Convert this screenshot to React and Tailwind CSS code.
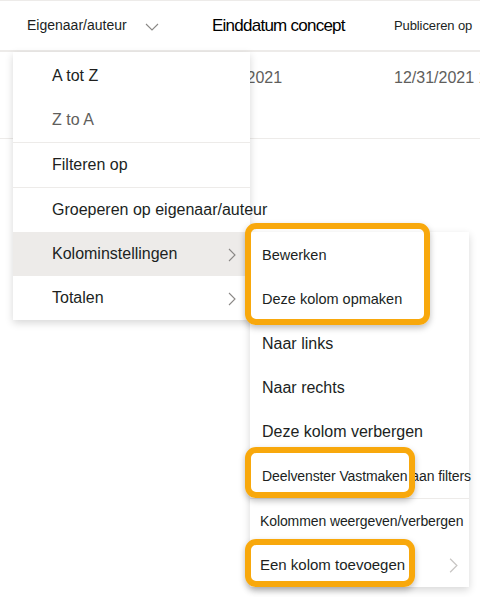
import React from 'react';

const Chevron = ({ className = '' }) => (
  <svg viewBox="0 0 8 14" className={className} fill="none" stroke="currentColor" strokeWidth="1.1">
    <path d="M1 1l6 6-6 6" />
  </svg>
);

const MenuItem = ({ children, active = false, arrow = false, muted = false }) => (
  <div
    className={`relative flex items-center h-[44px] pl-[39px] pr-3 text-[16px] whitespace-nowrap ${
      active ? 'bg-[#edebe9]' : ''
    } ${muted ? 'text-[#605e5c]' : 'text-[#201f1e]'}`}>
    <span>{children}</span>
    {arrow && <Chevron className="absolute left-[215px] top-[16px] w-[8px] h-[14px] text-[#8a8886]" />}
  </div>
);

const SubItem = ({ children, size = 'text-[16px]', arrow = false, pl = 'pl-[12px]' }) => (
  <div className={`relative flex items-center h-[44px] ${pl} ${size} text-[#201f1e] whitespace-nowrap`}>
    <span>{children}</span>
    {arrow && <Chevron className="absolute left-[199px] top-[14px] w-[9px] h-[17px] text-[#c8c6c4]" />}
  </div>
);

const Highlight = ({ className = '' }) => (
  <div
    className={`absolute border-[6px] border-[#f8a80c] rounded-[11px] shadow-[0_3px_6px_rgba(0,0,0,0.25)] ${className}`}
  />
);

export default function App() {
  return (
    <div className="relative w-[480px] h-[597px] bg-white overflow-hidden font-['Liberation_Sans',Arial,sans-serif]">
      {/* header */}
      <div className="flex items-center h-[52px] border-t border-b-2 border-[#edebe9] text-[#201f1e]">
        <div className="flex items-center shrink-0 w-[212px] pl-[27px]">
          <span className="text-[14px]">Eigenaar/auteur</span>
          <svg viewBox="0 0 14 8" className="ml-[18px] mt-[2px] w-[14px] h-[8px] text-[#8a8886]" fill="none" stroke="currentColor" strokeWidth="1.1">
            <path d="M1 1l6 6 6-6" />
          </svg>
        </div>
        <div className="shrink-0 w-[182px] text-[17px] tracking-[-0.75px] text-black">Einddatum concept</div>
        <div className="shrink-0 text-[13px] tracking-[-0.1px]">Publiceren op</div>
      </div>

      {/* data row */}
      <div className="flex items-start h-[87px] pt-[14px] border-b border-[#edebe9] text-[16px] text-[#605e5c] whitespace-nowrap">
        <div className="shrink-0 w-[202px]" />
        <div className="shrink-0 w-[192px]">12/31/2021</div>
        <div className="shrink-0">12/31/2021 11:59 PM</div>
      </div>

      {/* main column menu */}
      <div className="absolute left-[13px] top-[52px] w-[237px] bg-white pt-[2px] shadow-[0_3px_8px_rgba(0,0,0,0.16)]">
        <MenuItem>A tot Z</MenuItem>
        <MenuItem muted>Z to A</MenuItem>
        <div className="h-px bg-[#edebe9]" />
        <MenuItem>Filteren op</MenuItem>
        <div className="h-px bg-[#edebe9]" />
        <MenuItem>Groeperen op eigenaar/auteur</MenuItem>
        <MenuItem active arrow>Kolominstellingen</MenuItem>
        <MenuItem arrow>Totalen</MenuItem>
      </div>

      {/* submenu */}
      <div className="absolute left-[250px] top-[232px] w-[219px] bg-white pt-[2px] shadow-[0_3px_8px_rgba(0,0,0,0.16)]">
        <SubItem size="text-[14.5px]">Bewerken</SubItem>
        <SubItem size="text-[14.5px]">Deze kolom opmaken</SubItem>
        <SubItem>Naar links</SubItem>
        <SubItem>Naar rechts</SubItem>
        <SubItem>Deze kolom verbergen</SubItem>
        <SubItem size="text-[14px] tracking-[-0.1px]">Deelvenster Vastmaken aan filters</SubItem>
        <div className="h-px bg-[#edebe9]" />
        <SubItem size="text-[14px] tracking-[-0.1px]" pl="pl-[10px]">Kolommen weergeven/verbergen</SubItem>
        <SubItem size="text-[15px]" pl="pl-[10px]" arrow>Een kolom toevoegen</SubItem>
      </div>

      {/* callouts */}
      <Highlight className="left-[245px] top-[223px] w-[185px] h-[102px]" />
      <Highlight className="left-[245px] top-[447px] w-[170px] h-[51px]" />
      <Highlight className="left-[245px] top-[539px] w-[170px] h-[48px]" />
    </div>
  );
}
